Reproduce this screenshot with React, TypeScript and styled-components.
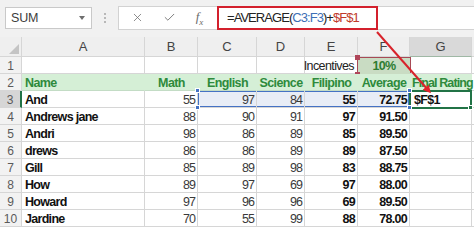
import React from 'react';
import styled, { createGlobalStyle, css } from 'styled-components';
import { X, Check } from 'lucide-react';

const GlobalStyle = createGlobalStyle`
  * { box-sizing: border-box; }
  body {
    margin: 0;
    background: #ffffff;
    font-family: 'Liberation Sans', Arial, sans-serif;
  }
`;

const COLS = ['A', 'B', 'C', 'D', 'E', 'F', 'G'];

const rows = [
  ['And', '55', '97', '84', '55', '72.75', '$F$1'],
  ['Andrews jane', '88', '90', '91', '97', '91.50', ''],
  ['Andri', '98', '86', '89', '85', '89.50', ''],
  ['drews', '86', '86', '89', '89', '87.50', ''],
  ['Gill', '85', '89', '98', '83', '88.75', ''],
  ['How', '89', '97', '69', '97', '88.00', ''],
  ['Howard', '97', '96', '96', '69', '89.50', ''],
  ['Jardine', '70', '55', '99', '88', '78.00', ''],
];

const headers = ['Name', 'Math', 'English', 'Science', 'Filipino', 'Average', 'Final Rating'];

type Edge = { t?: boolean; b?: boolean; l?: boolean; r?: boolean };

const App: React.FC = () => {
  return (
    <>
      <GlobalStyle />
      <Page>
        <Toolbar>
          <NameBox>
            <span>SUM</span>
            <Caret />
          </NameBox>
          <Grip>
            <i />
            <i />
            <i />
          </Grip>
          <FormulaBar>
            <FxButtons>
              <X size={13} strokeWidth={1.4} color="#6b6b6b" />
              <Check size={13} strokeWidth={1.6} color="#6b6b6b" />
              <Fx>
                f<sub>x</sub>
              </Fx>
            </FxButtons>
            <FormulaInput>
              =AVERAGE(<Ref $c="#3d6fb6">C3:F3</Ref>)+<Ref $c="#c0392b">$F$1</Ref>
            </FormulaInput>
          </FormulaBar>
        </Toolbar>

        <Sheet>
          <Corner>
            <svg width="10" height="10" viewBox="0 0 10 10">
              <path d="M10 0 L10 10 L0 10 Z" fill="#c4c4c4" />
            </svg>
          </Corner>
          {COLS.map(c => (
            <ColHead key={c} $active={c === 'G'}>
              {c}
            </ColHead>
          ))}
          <ColHead />

          <RowHead>1</RowHead>
          <Cell />
          <Cell />
          <Cell />
          <Cell />
          <Cell $align="right" $refRight>
            Incentives
          </Cell>
          <RefCell>10%</RefCell>
          <Cell />
          <Cell />

          <RowHead>2</RowHead>
          {headers.map((h, i) => (
            <HeadCell
              key={h}
              $align={i === 0 || i === 6 ? 'left' : 'center'}
              $tight={i === 6}
            >
              {h}
            </HeadCell>
          ))}
          <Cell />

          {rows.map((r, ri) => {
            const n = ri + 3;
            const first = n === 3;
            return (
              <React.Fragment key={n}>
                <RowHead $active={first}>{n}</RowHead>
                <Cell $bold $dark>
                  {r[0]}
                </Cell>
                <Cell $align="right">{r[1]}</Cell>
                {[2, 3, 4, 5].map(ci => {
                  const edge: Edge | undefined = first
                    ? { t: true, b: true, l: ci === 2, r: ci === 5 }
                    : undefined;
                  return (
                    <Cell
                      key={ci}
                      $align="right"
                      $bold={ci >= 4}
                      $dark={ci >= 4}
                      $range={edge}
                    >
                      {r[ci]}
                      {first && ci === 2 && (
                        <>
                          <Handle $c="#4472c4" $pos="tl" />
                          <Handle $c="#4472c4" $pos="bl" />
                        </>
                      )}
                      {first && ci === 5 && (
                        <>
                          <Handle $c="#4472c4" $pos="tr" />
                          <Handle $c="#4472c4" $pos="br" />
                        </>
                      )}
                    </Cell>
                  );
                })}
                {first ? (
                  <ActiveCell>
                    {r[6]}
                    <Handle $c="#217346" $pos="br" />
                  </ActiveCell>
                ) : (
                  <Cell>{r[6]}</Cell>
                )}
                <Cell />
              </React.Fragment>
            );
          })}
        </Sheet>

        <Arrow width="474" height="227" viewBox="0 0 474 227">
          <defs>
            <marker
              id="head"
              markerWidth="8"
              markerHeight="8"
              refX="5"
              refY="4"
              orient="auto"
              markerUnits="userSpaceOnUse"
            >
              <path d="M0 0 L8 4 L0 8 Z" fill="#e0242c" />
            </marker>
          </defs>
          <line
            x1="377"
            y1="32"
            x2="429"
            y2="91"
            stroke="#d8232b"
            strokeWidth="2"
            markerEnd="url(#head)"
          />
        </Arrow>
      </Page>
    </>
  );
};

const Page = styled.div`
  position: relative;
  width: 474px;
  height: 227px;
  overflow: hidden;
  background: #ffffff;
`;

const Toolbar = styled.div`
  display: flex;
  align-items: center;
  height: 37px;
  padding: 0 0 2px 5px;
  background: #f1f1f1;
`;

const NameBox = styled.div`
  display: flex;
  align-items: center;
  justify-content: space-between;
  width: 87px;
  height: 22px;
  padding: 0 6px 0 5px;
  background: #ffffff;
  border: 1px solid #c9c9c9;
  font-size: 12.5px;
  color: #3c3c3c;
  letter-spacing: -0.2px;
`;

const Caret = styled.span`
  width: 0;
  height: 0;
  border-left: 3px solid transparent;
  border-right: 3px solid transparent;
  border-top: 4px solid #6e6e6e;
`;

const Grip = styled.div`
  display: flex;
  flex-direction: column;
  align-items: center;
  gap: 2px;
  width: 26px;

  i {
    display: block;
    width: 2px;
    height: 2px;
    background: #b8b8b8;
  }
`;

const FormulaBar = styled.div`
  display: flex;
  align-items: stretch;
  flex: 1;
  height: 24px;
  background: #ffffff;
  border: 1px solid #d2d2d2;
  border-right: none;
`;

const FxButtons = styled.div`
  display: flex;
  align-items: center;
  justify-content: space-around;
  width: 98px;
  padding: 0 4px 0 2px;
`;

const Fx = styled.span`
  font-family: 'Liberation Serif', 'Times New Roman', serif;
  font-style: italic;
  font-size: 13px;
  color: #6b6b6b;

  sub {
    font-size: 9px;
  }
`;

const FormulaInput = styled.div`
  display: flex;
  align-items: center;
  width: 161px;
  margin: -1px 0;
  padding-left: 8px;
  border: 2px solid #d3202d;
  font-size: 13px;
  letter-spacing: -0.95px;
  color: #222222;
  white-space: nowrap;
`;

const Ref = styled.span<{ $c: string }>`
  color: ${p => p.$c};
`;

const Sheet = styled.div`
  display: grid;
  grid-template-columns: 22px 123px 53px 59px 48px 53px 52px 62px 20px;
  grid-template-rows: 20px;
  grid-auto-rows: 17px;
`;

const headBase = css`
  display: flex;
  align-items: center;
  justify-content: center;
  background: #efefef;
  color: #444444;
  font-size: 12px;
  border-right: 1px solid #d6d6d6;
  border-bottom: 1px solid #d6d6d6;
`;

const Corner = styled.div`
  ${headBase};
  align-items: flex-end;
  justify-content: flex-end;
  padding: 0 2px 2px 0;
`;

const ColHead = styled.div<{ $active?: boolean }>`
  ${headBase};
  font-size: 13px;
  ${p =>
    p.$active &&
    css`
      background: #d9d9d9;
      border-bottom: 1px solid #9fb8a5;
    `}
`;

const RowHead = styled.div<{ $active?: boolean }>`
  ${headBase};
  background: #f2f2f2;
  color: #5a5a5a;
  padding-top: 1px;
  ${p =>
    p.$active &&
    css`
      background: #d6d6d6;
      border-right: 2px solid #217346;
    `}
`;

const rangeShadow = (e?: Edge) => {
  if (!e) return '';
  const s: string[] = [];
  if (e.t) s.push('inset 0 1px 0 #4472c4');
  if (e.b) s.push('inset 0 -1px 0 #4472c4');
  if (e.l) s.push('inset 1px 0 0 #4472c4');
  if (e.r) s.push('inset -1px 0 0 #4472c4');
  return css`
    background: #e8edf6;
    box-shadow: ${s.join(', ')};
  `;
};

const Cell = styled.div<{
  $align?: 'left' | 'right' | 'center';
  $bold?: boolean;
  $dark?: boolean;
  $range?: Edge;
  $refRight?: boolean;
}>`
  position: relative;
  display: flex;
  align-items: center;
  justify-content: ${p =>
    p.$align === 'right' ? 'flex-end' : p.$align === 'center' ? 'center' : 'flex-start'};
  padding: 1px 2px 0 3px;
  border-right: 1px solid #d6d6d6;
  border-bottom: 1px solid #d6d6d6;
  font-size: 12.5px;
  font-weight: ${p => (p.$bold ? 700 : 400)};
  letter-spacing: ${p => (p.$bold ? '-0.7px' : '-0.9px')};
  color: ${p => (p.$dark ? '#111111' : '#3a3a3a')};
  white-space: nowrap;
  ${p => rangeShadow(p.$range)}
  ${p =>
    p.$refRight &&
    css`
      padding-right: 3px;
      letter-spacing: -0.6px;
      color: #222222;
    `}
`;

const HeadCell = styled(Cell)<{ $tight?: boolean }>`
  background: #d5efd6;
  color: #2e8a3c;
  font-weight: 700;
  letter-spacing: ${p => (p.$tight ? '-0.9px' : '-0.6px')};
  padding-left: ${p => (p.$tight ? '2px' : '3px')};
  border-right-color: #d5efd6;
  border-bottom-color: #c3dcc5;
`;

const RefCell = styled.div`
  position: relative;
  display: flex;
  align-items: center;
  justify-content: center;
  margin: 0 -1px -1px -1px;
  background: #c9dcc3;
  border: 1px solid #a74a56;
  color: #2e7d32;
  font-size: 12.5px;
  font-weight: 700;
  letter-spacing: -0.6px;

  &::before,
  &::after {
    content: '';
    position: absolute;
    left: -3px;
    width: 5px;
    height: 5px;
    background: #b0465a;
  }
  &::before {
    top: -3px;
  }
  &::after {
    bottom: -3px;
  }
`;

const ActiveCell = styled(Cell)`
  border: 2px solid #217346;
  margin: -1px 0 -1px -1px;
  padding-left: 3px;
  font-weight: 700;
  letter-spacing: -0.7px;
  color: #111111;
`;

const handlePos = {
  tl: 'top: -3px; left: -3px;',
  bl: 'bottom: -3px; left: -3px;',
  tr: 'top: -3px; right: -3px;',
  br: 'bottom: -3px; right: -3px;',
};

const Handle = styled.span<{ $c: string; $pos: keyof typeof handlePos }>`
  position: absolute;
  width: 5px;
  height: 5px;
  background: ${p => p.$c};
  border: 1px solid #ffffff;
  z-index: 2;
  ${p => handlePos[p.$pos]}
`;

const Arrow = styled.svg`
  position: absolute;
  top: 0;
  left: 0;
  pointer-events: none;
  z-index: 5;
`;

export default App;
